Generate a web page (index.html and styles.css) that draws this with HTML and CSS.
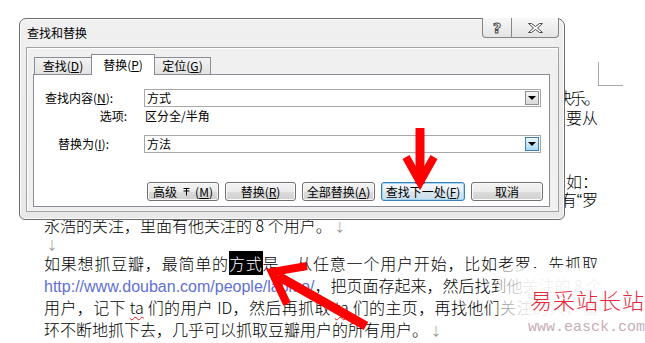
FILE: index.html
```html
<!DOCTYPE html>
<html lang="zh-CN">
<head>
    <meta charset="UTF-8">
    <title>查找和替换</title>
    <link rel="stylesheet" href="styles.css">
</head>
<body>
<div class="page">
    <div class="doc">
        <div class="mark"></div>
        <p class="para para-top">
            <span class="ln-r ln-tight">让人觉得很快乐。</span>
            <span class="ln-r">如果要从</span>
        </p>
        <p class="para para-mid">
            <span class="ln-r">比如：</span>
            <span class="ln-r">里面有<span class="q">“</span>罗</span>
        </p>
        <p class="para para-low">
            <span class="ln-l">永浩的关注，里面有他关注的 8 个用户。<i class="pm">↓</i></span>
            <span class="ln-l"><i class="pm">↓</i></span>
        </p>
        <p class="para para-main">
            <span class="ln">如果想抓豆瓣，最简单的<span class="sel">方式</span>是，从任意一个用户开始，比如老罗，先抓取</span>
            <span class="ln"><span class="link">http://www.douban.com/people/laoluo/</span>，把页面存起来，然后找到他关注的 8 个</span>
            <span class="ln">用户，记下 <span class="typo">ta</span> 们的用户 ID，然后再抓取 <span class="typo">ta</span> 们的主页，再找他们关注的人，循</span>
            <span class="ln ln-end">环不断地抓下去，几乎可以抓取豆瓣用户的所有用户。<i class="pm">↓</i></span>
        </p>
    </div>

    <div class="dialog">
        <div class="titlebar">
            <span class="title">查找和替换</span>
            <div class="caps">
                <div class="cap cap-help"><span class="help-glyph">?</span></div>
                <div class="cap cap-close">
                    <svg width="15" height="10" viewBox="0 0 15 10">
                        <path d="M0.5 0.5H3.5L7.5 3.5L11.5 0.5H14.5L9.5 5L14.5 9.5H11.5L7.5 6.5L3.5 9.5H0.5L5.5 5Z" fill="#fff" stroke="#4a4a4a" stroke-width="1"/>
                    </svg>
                </div>
            </div>
        </div>
        <div class="client">
            <div class="tabs">
                <div class="tab tab-find">查找(<u>D</u>)</div>
                <div class="tab tab-active">替换(<u>P</u>)</div>
                <div class="tab tab-goto">定位(<u>G</u>)</div>
            </div>
            <div class="panel">
                <div class="form">
                    <label class="lbl">查找内容(<u>N</u>):</label>
                    <div class="combo">
                        <span class="combo-text">方式</span>
                        <span class="drop"><span class="caret"></span></span>
                    </div>
                    <span class="lbl lbl-opt">选项:</span>
                    <span class="opt-value">区分全/半角</span>
                    <label class="lbl lbl-rep">替换为(<u>I</u>):</label>
                    <div class="combo">
                        <span class="combo-text">方法</span>
                        <span class="drop drop-hot"><span class="caret"></span></span>
                    </div>
                </div>
                <div class="buttons">
                    <button class="btn btn-more">高级
                        <svg class="more-icon" width="7" height="9" viewBox="0 0 7 9">
                            <path d="M0.5 1.5H6.5M0.5 4H6.5M3.5 1.5V8.5" stroke="#000" stroke-width="1" fill="none"/>
                        </svg>
                        (<u>M</u>)</button>
                    <button class="btn btn-rep">替换(<u>R</u>)</button>
                    <button class="btn btn-all">全部替换(<u>A</u>)</button>
                    <button class="btn btn-next">查找下一处(<u>F</u>)</button>
                    <button class="btn btn-cancel">取消</button>
                </div>
            </div>
        </div>
    </div>

    <svg class="arrows" width="645" height="343" viewBox="0 0 645 343">
        <g stroke="#ff0000" fill="none" stroke-linejoin="miter" stroke-miterlimit="10">
            <path d="M420 128V184" stroke-width="9"/>
            <path d="M406 157L420 182L434 157" stroke-width="8"/>
            <path d="M278 276L366 326" stroke-width="9"/>
            <path d="M307 266L272 272L287 304" stroke-width="8"/>
        </g>
    </svg>

    <div class="watermark">
        <span class="wm-cn">易采站长站</span>
        <span class="wm-url">www.easck.com</span>
    </div>
</div>
</body>
</html>
```

FILE: styles.css
```css
* {
    margin: 0;
    padding: 0;
    box-sizing: border-box;
}

body {
    width: 645px;
    height: 343px;
    overflow: hidden;
    background: #fff;
    font-family: "Noto Sans CJK SC", sans-serif;
}

.page {
    position: relative;
    width: 645px;
    height: 343px;
    overflow: hidden;
}

/* document behind the dialog */
.doc {
    padding: 62px 47px 0 44px;
    font-size: 16px;
    font-weight: 300;
    color: #000;
}

.mark {
    margin-left: 554px;
    width: 25px;
    height: 24px;
    border-left: 1px solid #a9a9a9;
    border-bottom: 1px solid #a9a9a9;
    margin-bottom: 1px;
}

.para span.ln-r,
.para span.ln-l,
.para span.ln {
    display: block;
    white-space: nowrap;
}

.para-top {
    line-height: 20px;
    text-align: right;
    margin-bottom: 45px;
}

.ln-tight {
    letter-spacing: -2px;
}

.q {
    font-family: "Liberation Sans", sans-serif;
    line-height: 1px;
}

.para-mid {
    line-height: 18px;
    text-align: right;
    margin-bottom: 8px;
}

.para-low {
    line-height: 18px;
}

.para-main {
    line-height: 22px;
}

.ln {
    text-align: justify;
    text-align-last: justify;
}

.ln-end {
    text-align-last: left;
}

.pm {
    font-style: normal;
    font-size: 12px;
    line-height: 1px;
    color: #808080;
    margin-left: 2px;
}

.sel {
    background: #000;
    color: #fff;
}

.link {
    font-family: "Liberation Sans", sans-serif;
    font-weight: 400;
    line-height: 1px;
    color: #5f70d4;
}

.typo {
    text-decoration: underline wavy #e02020;
    text-decoration-thickness: 1px;
    text-underline-offset: 2px;
    text-decoration-skip-ink: none;
}

/* dialog window */
.dialog {
    position: absolute;
    left: 19px;
    top: 18px;
    width: 546px;
    height: 202px;
    border: 1px solid #6e6e6e;
    border-radius: 7px 8px 6px 6px;
    background: linear-gradient(#f0f0f0, #e8e8e8);
    box-shadow: inset 0 0 0 1px #fafafa;
    font-size: 12px;
    color: #000;
}

.titlebar {
    display: flex;
    justify-content: space-between;
    height: 28px;
    padding-left: 7px;
}

.title {
    align-self: center;
    line-height: 14px;
}

.caps {
    display: flex;
    height: 20px;
    margin-top: -1px;
    margin-right: 5px;
}

.cap {
    display: flex;
    align-items: center;
    justify-content: center;
    border: 1px solid #858585;
    border-top: 0;
    background: linear-gradient(#f8f8f8, #e4e4e4);
}

.cap-help {
    width: 30px;
    border-radius: 0 0 0 4px;
}

.cap-close {
    width: 47px;
    border-left: 0;
    border-radius: 0 0 4px 0;
}

.help-glyph {
    font: bold 14px "DejaVu Sans", sans-serif;
    line-height: 14px;
    color: #fff;
    -webkit-text-stroke: 1px #4a4a4a;
}

.client {
    margin: 0 5px 0 6px;
    height: 165px;
    border: 1px solid #a3a3a3;
    background: #f0f0f0;
    box-shadow: inset 1px 1px 0 #fff;
    padding: 6px 8px 0 6px;
}

.tabs {
    position: relative;
    z-index: 1;
    display: flex;
    align-items: flex-end;
    height: 21px;
    margin-bottom: -1px;
    padding-left: 1px;
}

.tab {
    display: flex;
    align-items: center;
    justify-content: center;
    height: 17px;
    margin-bottom: 1px;
    border: 1px solid #898c95;
    border-bottom: 0;
    background: linear-gradient(#f3f3f3, #e2e2e2);
    line-height: 14px;
}

.tab-find {
    width: 58px;
}

.tab-active {
    width: 64px;
    height: 21px;
    margin: 0 0 0 -1px;
    background: #fff;
    padding-bottom: 1px;
}

.tab-goto {
    width: 57px;
    margin-left: -1px;
}

.panel {
    height: 133px;
    border: 1px solid #898c95;
    background: #fff;
    padding: 14px 8px 0 11px;
}

.form {
    display: grid;
    grid-template-columns: 99px 397px;
    grid-template-rows: 18px 28px 18px;
}

.lbl {
    align-self: center;
    line-height: 14px;
}

.lbl-opt {
    align-self: start;
    justify-self: end;
    padding-right: 17px;
    line-height: 17px;
}

.lbl-rep {
    padding-left: 13px;
}

.opt-value {
    align-self: start;
    line-height: 17px;
    padding-left: 1px;
}

.combo {
    display: flex;
    align-items: center;
    justify-content: space-between;
    border: 1px solid #a7a7a7;
    padding: 0 1px 0 2px;
}

.combo-text {
    line-height: 14px;
}

.drop {
    display: flex;
    align-items: center;
    justify-content: center;
    width: 14px;
    height: 14px;
    border: 1px solid #909090;
    background: linear-gradient(#f6f6f6, #d9d9d9);
}

.drop-hot {
    border-color: #3c7fb1;
    background: linear-gradient(#eaf6fd, #a9dbf6);
}

.caret {
    width: 0;
    height: 0;
    border-left: 4px solid transparent;
    border-right: 4px solid transparent;
    border-top: 4px solid #000;
}

.buttons {
    display: flex;
    justify-content: flex-end;
    gap: 6px;
    margin-top: 29px;
    margin-right: -2px;
}

.btn {
    display: flex;
    align-items: center;
    justify-content: center;
    height: 19px;
    border: 1px solid #707070;
    border-radius: 3px;
    background: linear-gradient(#f3f3f3 0%, #ebebeb 50%, #dddddd 51%, #cfcfcf 100%);
    box-shadow: inset 0 0 0 1px #fbfbfb;
    font-family: "Noto Sans CJK SC", sans-serif;
    font-size: 12px;
    line-height: 14px;
    color: #000;
}

.btn-more {
    width: 72px;
}

.more-icon {
    margin: 0 5px 0 6px;
}

.btn-rep {
    width: 71px;
}

.btn-all {
    width: 73px;
}

.btn-next {
    width: 84px;
    border-color: #3c7fb1;
    box-shadow: inset 0 0 0 1px #9ed8f6;
    background: linear-gradient(#f4f9fc 0%, #e6eff5 50%, #d8e6ef 51%, #cddde9 100%);
}

.btn-cancel {
    width: 72px;
}

/* annotations */
.arrows {
    position: absolute;
    left: 0;
    top: 0;
    pointer-events: none;
}

.watermark {
    position: absolute;
    left: 498px;
    top: 268px;
    width: 147px;
    height: 75px;
    display: flex;
    flex-direction: column;
    padding: 20px 0 0 32px;
    background: linear-gradient(to right, rgba(255, 255, 255, 0.5), rgba(255, 255, 255, 0.93) 22%);
}

.wm-cn {
    font-size: 22px;
    line-height: 22px;
    letter-spacing: 1px;
    font-weight: 300;
    color: #e8283a;
    white-space: nowrap;
}

.wm-url {
    margin: 10px 0 0 -2px;
    font-family: "Liberation Mono", monospace;
    font-size: 15px;
    line-height: 16px;
    color: #c7aeb8;
    white-space: nowrap;
}
```
